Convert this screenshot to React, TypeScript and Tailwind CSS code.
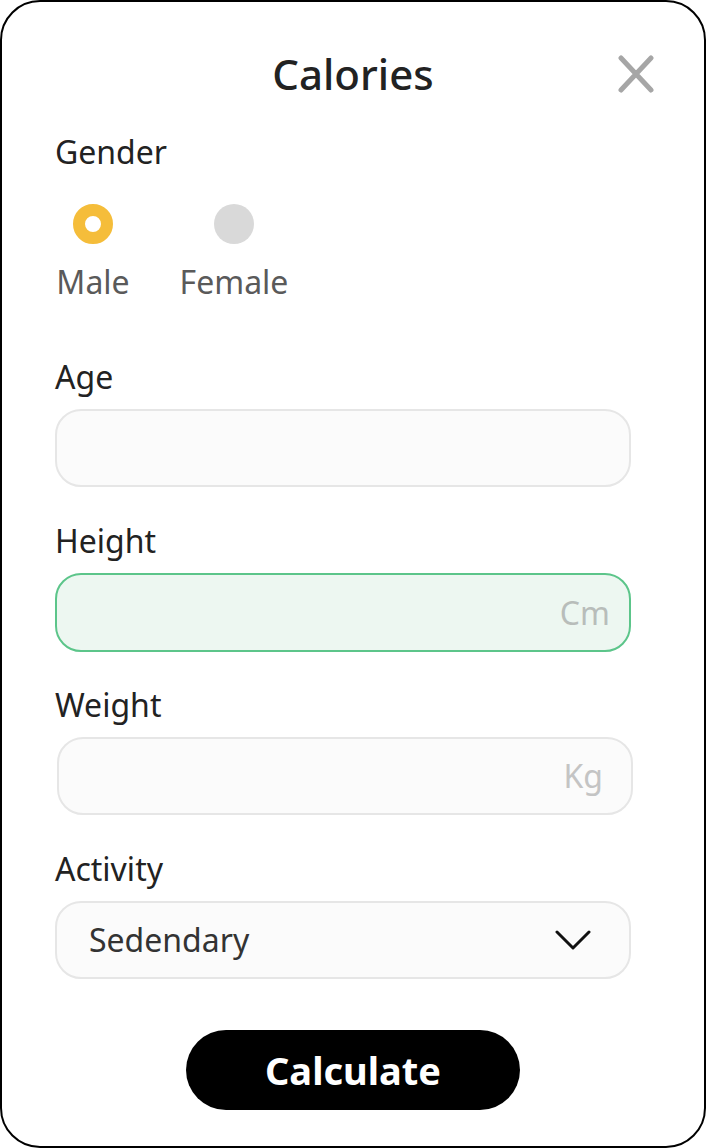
import React from "react";

const font = { fontFamily: '"Noto Sans", "Open Sans", sans-serif' };

function Label({ children }: { children: React.ReactNode }) {
  return <div className="h-10 text-[32px] leading-10 text-[#222]">{children}</div>;
}

export default function App() {
  return (
    <div style={font} className="relative h-[1148px] w-[706px] rounded-[40px] border-2 border-black bg-white">
      <button aria-label="Close" className="absolute right-[50px] top-[53px] h-[38px] w-[36px]">
        <svg viewBox="0 0 36 38" className="h-full w-full" fill="none" stroke="#a6a6a6" strokeWidth="5" strokeLinecap="round">
          <path d="M3 3 L33 35 M33 3 L3 35" />
        </svg>
      </button>

      <h1 className="pt-[44px] text-center text-[42px] font-medium leading-[56px] text-[#222]">Calories</h1>

      <div className="ml-[53px] w-[576px]">
        <div className="mt-[30px]">
          <Label>Gender</Label>
        </div>

        <div className="mt-[32px] flex gap-[48px]">
          <div className="flex w-[76px] flex-col items-center">
            <span className="h-10 w-10 rounded-full border-[12px] border-[#f5bd3a] bg-white" />
            <span className="mt-[18px] text-[32px] leading-10 text-[#5a5a5a]">Male</span>
          </div>
          <div className="flex w-[110px] flex-col items-center">
            <span className="h-10 w-10 rounded-full bg-[#d9d9d9]" />
            <span className="mt-[18px] text-[32px] leading-10 text-[#5a5a5a]">Female</span>
          </div>
        </div>

        <div className="mt-[55px]">
          <Label>Age</Label>
          <div className="mt-3 h-[78px] rounded-[26px] border-2 border-[#e6e6e6] bg-[#fbfbfb]" />
        </div>

        <div className="mt-[34px]">
          <Label>Height</Label>
          <div className="mt-3 flex h-[79px] items-center justify-end rounded-[26px] border-2 border-[#5cc58a] bg-[#edf7f1] pr-[19px]">
            <span className="text-[32px] text-[#b8bdba]">Cm</span>
          </div>
        </div>

        <div className="mt-[33px]">
          <Label>Weight</Label>
          <div className="ml-[2px] -mr-[2px] mt-3 flex h-[78px] items-center justify-end rounded-[26px] border-2 border-[#e6e6e6] bg-[#fbfbfb] pr-[28px]">
            <span className="text-[32px] text-[#c4c4c4]">Kg</span>
          </div>
        </div>

        <div className="mt-[34px]">
          <Label>Activity</Label>
          <div className="mt-3 flex h-[78px] items-center justify-between rounded-[26px] border-2 border-[#e6e6e6] bg-[#fbfbfb] pl-[32px] pr-[38px]">
            <span className="text-[32px] text-[#333]">Sedendary</span>
            <svg width="36" height="22" viewBox="0 0 36 22" fill="none" stroke="#111" strokeWidth="3" strokeLinecap="round" strokeLinejoin="round">
              <path d="M2 3 L18 19 L34 3" />
            </svg>
          </div>
        </div>
      </div>

      <div className="mt-[51px] flex justify-center">
        <button className="h-[80px] w-[334px] rounded-full bg-black text-[38px] font-bold text-white">Calculate</button>
      </div>
    </div>
  );
}
